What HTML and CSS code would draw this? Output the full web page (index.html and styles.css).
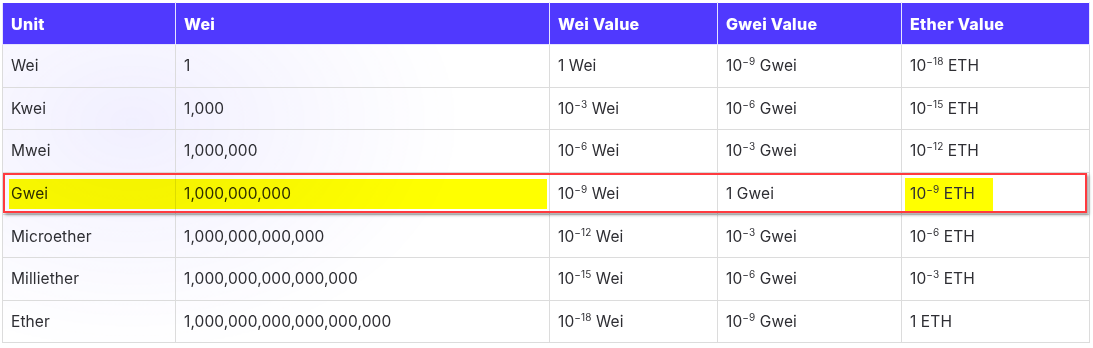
FILE: index.html
```html
<!DOCTYPE html>
<html>
<head>
<meta charset="utf-8">
<link rel="stylesheet" href="styles.css">
</head>
<body>
<div class="wrap">
  <table class="units">
    <colgroup>
      <col class="c1"><col class="c2"><col class="c3"><col class="c4"><col class="c5">
    </colgroup>
    <thead>
      <tr><th>Unit</th><th>Wei</th><th>Wei Value</th><th>Gwei Value</th><th>Ether Value</th></tr>
    </thead>
    <tbody>
      <tr><td>Wei</td><td>1</td><td>1 Wei</td><td>10<sup>−9</sup> Gwei</td><td>10<sup>−18</sup> ETH</td></tr>
      <tr><td>Kwei</td><td>1,000</td><td>10<sup>−3</sup> Wei</td><td>10<sup>−6</sup> Gwei</td><td>10<sup>−15</sup> ETH</td></tr>
      <tr><td>Mwei</td><td>1,000,000</td><td>10<sup>−6</sup> Wei</td><td>10<sup>−3</sup> Gwei</td><td>10<sup>−12</sup> ETH</td></tr>
      <tr class="marked"><td>Gwei</td><td>1,000,000,000</td><td>10<sup>−9</sup> Wei</td><td>1 Gwei</td><td><span class="hl">10<sup>−9</sup> ETH</span></td></tr>
      <tr><td>Microether</td><td>1,000,000,000,000</td><td>10<sup>−12</sup> Wei</td><td>10<sup>−3</sup> Gwei</td><td>10<sup>−6</sup> ETH</td></tr>
      <tr><td>Milliether</td><td>1,000,000,000,000,000</td><td>10<sup>−15</sup> Wei</td><td>10<sup>−6</sup> Gwei</td><td>10<sup>−3</sup> ETH</td></tr>
      <tr><td>Ether</td><td>1,000,000,000,000,000,000</td><td>10<sup>−18</sup> Wei</td><td>10<sup>−9</sup> Gwei</td><td>1 ETH</td></tr>
    </tbody>
  </table>
  <div class="mark-fill"></div>
  <div class="mark-box"></div>
</div>
</body>
</html>
```

FILE: styles.css
```css
html, body {
  margin: 0;
  padding: 0;
  background: #ffffff;
}

.wrap {
  position: relative;
  padding: 2px 0 0 2px;
  width: 1087px;
  font-family: "Inter", "Noto Sans", sans-serif;
  font-size: 15.5px;
  letter-spacing: 0.1px;
  color: #2e2e33;
}

.units {
  border-collapse: collapse;
  width: 1088px;
  table-layout: fixed;
  background:
    radial-gradient(ellipse 330px 230px at 130px 120px, rgba(96, 76, 255, 0.085), rgba(96, 76, 255, 0) 100%),
    #ffffff;
}

.c1 { width: 173px; }
.c2 { width: 374px; }
.c3 { width: 168px; }
.c4 { width: 184px; }
.c5 { width: 188px; }

.units th,
.units td {
  border: 1px solid #dcdcdc;
  text-align: left;
  padding: 0 0 0 8px;
  white-space: nowrap;
}

.units th {
  background: #5039fe;
  color: #ffffff;
  font-size: 16px;
  font-weight: 800;
  letter-spacing: 0.3px;
  height: 41px;
  border-color: #e6e3ff;
}

.units thead tr:first-child th {
  border-top-color: #ffffff;
}

.units td {
  height: 41.6px;
}

.units sup {
  font-size: 10px;
  line-height: 0;
  vertical-align: 6px;
}

.hl {
  background: #ffff00;
  padding: 6px 18px 9px 5px;
  margin-left: -5px;
}

.mark-fill {
  position: absolute;
  left: 9px;
  top: 179px;
  width: 538px;
  height: 30px;
  background: #ffff00;
  mix-blend-mode: multiply;
  pointer-events: none;
}

.mark-box {
  position: absolute;
  left: 3px;
  top: 173px;
  width: 1080px;
  height: 36px;
  border: 2px solid #ff3a3f;
  box-shadow: 2px 2px 3px rgba(0, 0, 0, 0.35);
  pointer-events: none;
}
```
